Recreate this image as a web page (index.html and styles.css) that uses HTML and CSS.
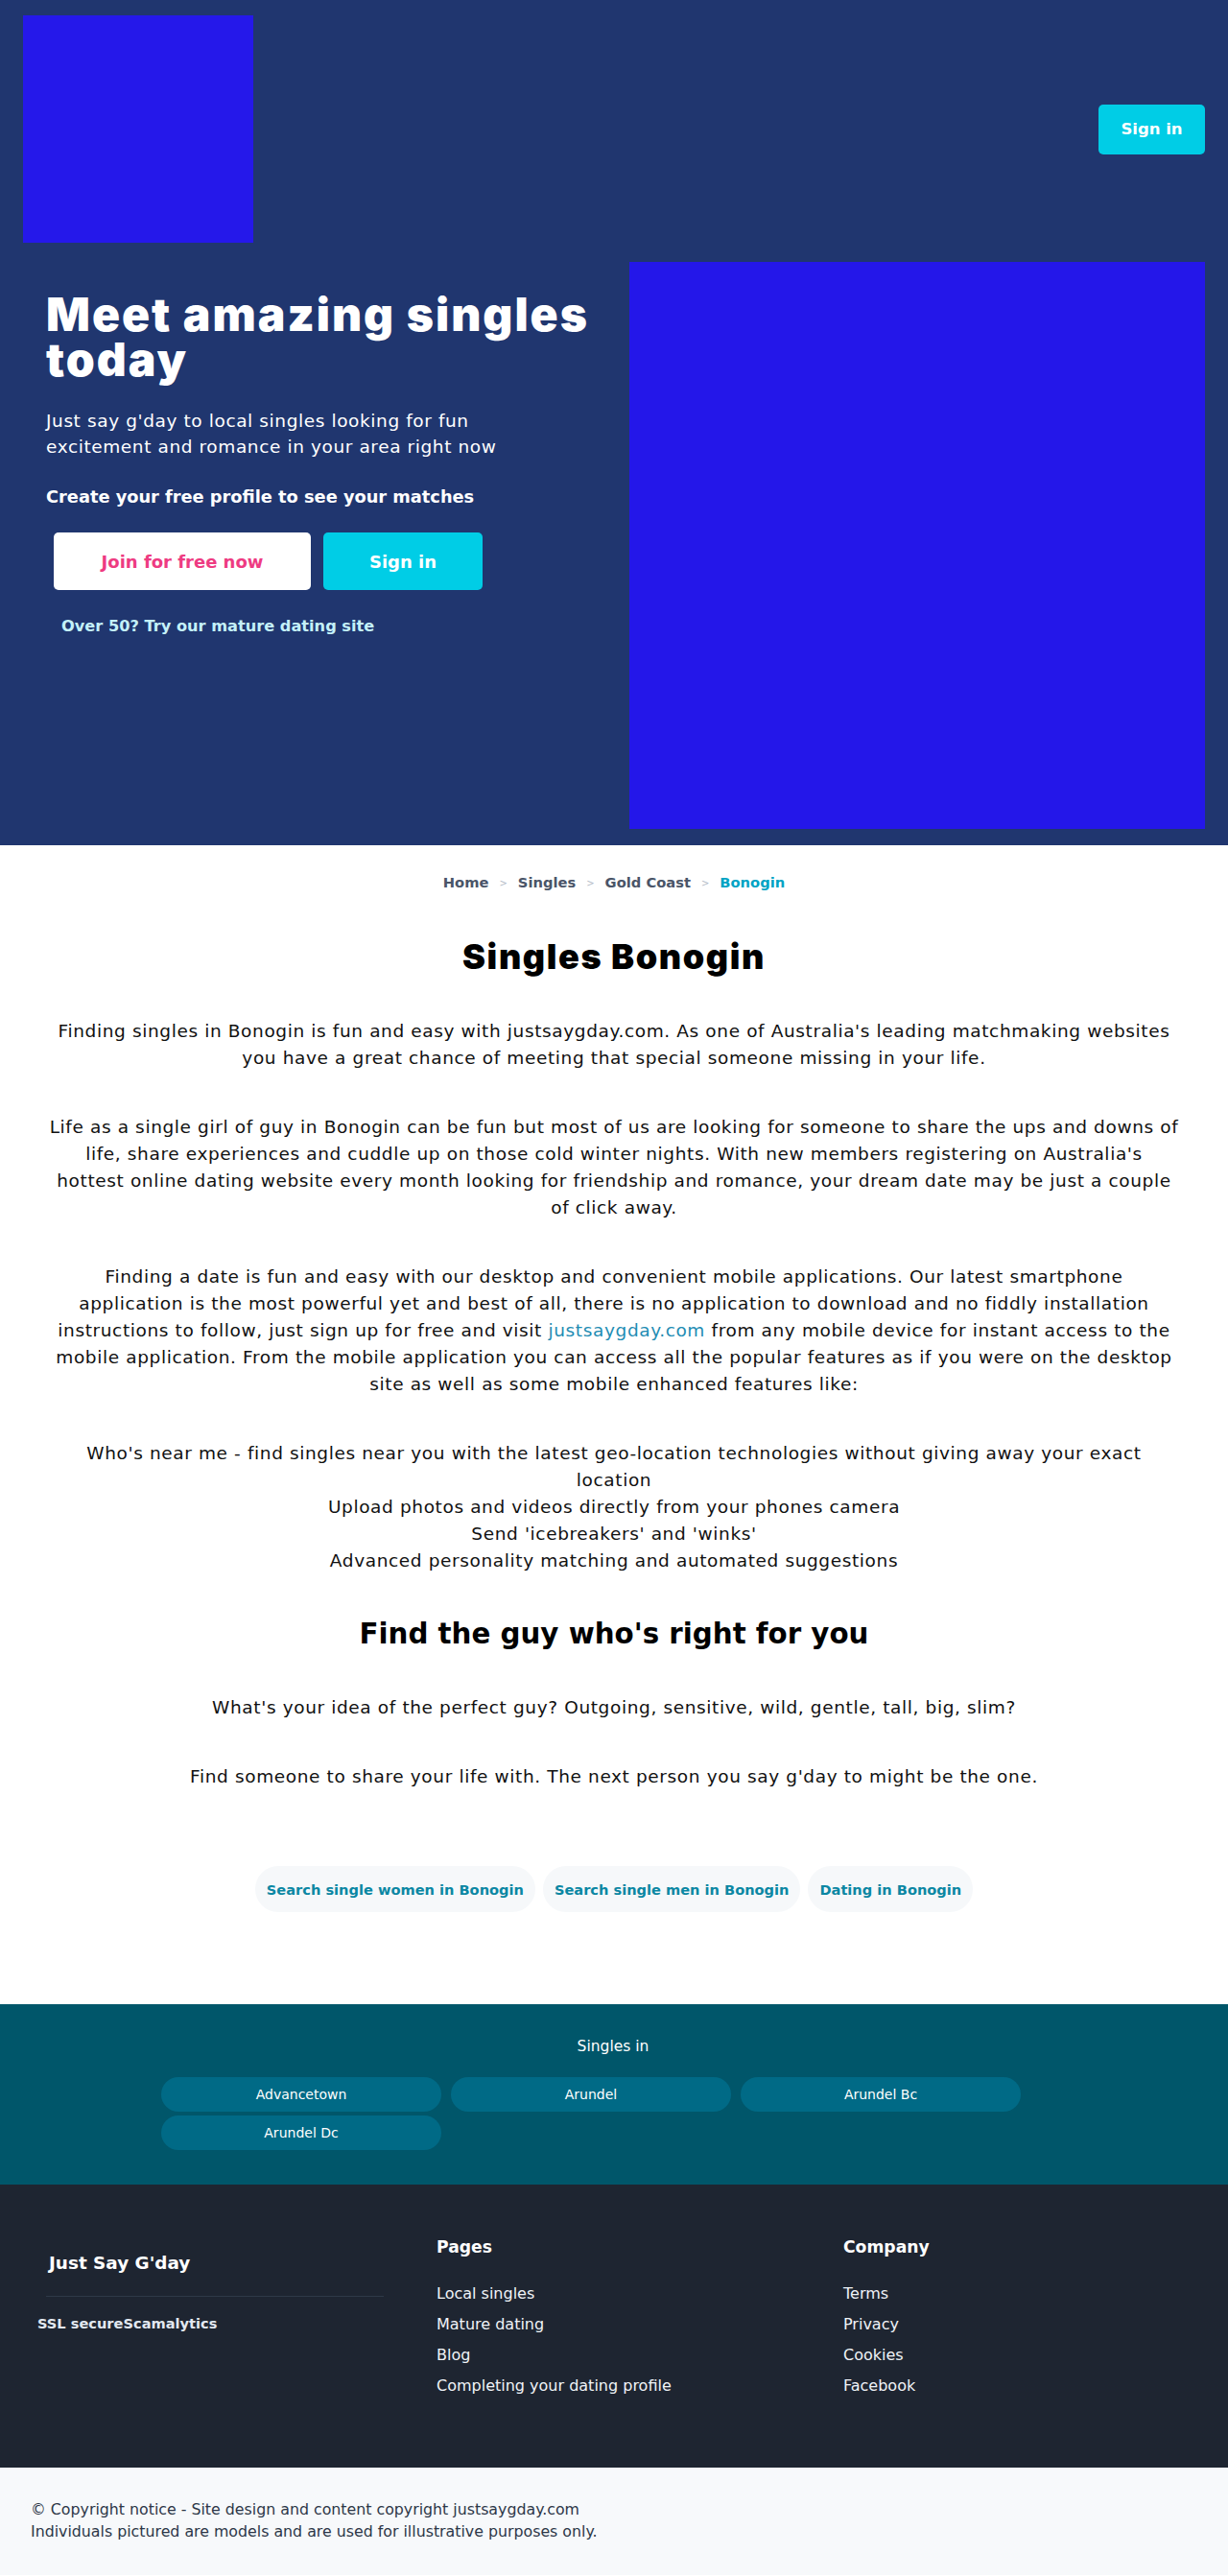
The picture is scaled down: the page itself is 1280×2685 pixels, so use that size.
FILE: index.html
```html
<!DOCTYPE html>
<html lang="en">
<head>
<meta charset="utf-8">
<title>Singles Bonogin</title>
<link rel="stylesheet" href="styles.css">
</head>
<body>
<header class="hero">
  <div class="topbar">
    <div class="logo"></div>
    <a class="btn btn-cyan btn-top" href="#">Sign in</a>
  </div>
  <div class="hero-body">
    <div class="hero-text">
      <h1 class="hero-title">Meet amazing singles today</h1>
      <p class="hero-lead">Just say g'day to local singles looking for fun excitement and romance in your area right now</p>
      <p class="hero-cta">Create your free profile to see your matches</p>
      <div class="hero-buttons">
        <a class="btn btn-white" href="#">Join for free now</a>
        <a class="btn btn-cyan btn-hero" href="#">Sign in</a>
      </div>
      <a class="mature" href="#">Over 50? Try our mature dating site</a>
    </div>
    <div class="hero-image"></div>
  </div>
</header>

<main class="content">
  <nav class="crumbs">
    <a href="#">Home</a><span class="sep">&gt;</span>
    <a href="#">Singles</a><span class="sep">&gt;</span>
    <a href="#">Gold Coast</a><span class="sep">&gt;</span>
    <a class="current" href="#">Bonogin</a>
  </nav>
  <h1 class="page-title">Singles Bonogin</h1>
  <p>Finding singles in Bonogin is fun and easy with justsaygday.com. As one of Australia's leading matchmaking websites you have a great chance of meeting that special someone missing in your life.</p>
  <p>Life as a single girl of guy in Bonogin can be fun but most of us are looking for someone to share the ups and downs of<br>life, share experiences and cuddle up on those cold winter nights. With new members registering on Australia's<br>hottest online dating website every month looking for friendship and romance, your dream date may be just a couple<br>of click away.</p>
  <p>Finding a date is fun and easy with our desktop and convenient mobile applications. Our latest smartphone<br>application is the most powerful yet and best of all, there is no application to download and no fiddly installation<br>instructions to follow, just sign up for free and visit <a class="inline-link" href="#">justsaygday.com</a> from any mobile device for instant access to the<br>mobile application. From the mobile application you can access all the popular features as if you were on the desktop<br>site as well as some mobile enhanced features like:</p>
  <ul class="features">
    <li>Who's near me - find singles near you with the latest geo-location technologies without giving away your exact location</li>
    <li>Upload photos and videos directly from your phones camera</li>
    <li>Send 'icebreakers' and 'winks'</li>
    <li>Advanced personality matching and automated suggestions</li>
  </ul>
  <h2 class="sub-title">Find the guy who's right for you</h2>
  <p>What's your idea of the perfect guy? Outgoing, sensitive, wild, gentle, tall, big, slim?</p>
  <p>Find someone to share your life with. The next person you say g'day to might be the one.</p>
  <div class="search-links">
    <a class="pill-link" href="#">Search single women in Bonogin</a>
    <a class="pill-link" href="#">Search single men in Bonogin</a>
    <a class="pill-link" href="#">Dating in Bonogin</a>
  </div>
</main>

<section class="nearby">
  <div class="nearby-title">Singles in</div>
  <div class="nearby-grid">
    <a class="town" href="#">Advancetown</a>
    <a class="town" href="#">Arundel</a>
    <a class="town" href="#">Arundel Bc</a>
    <a class="town" href="#">Arundel Dc</a>
  </div>
</section>

<footer class="footer">
  <div class="footer-cols">
    <div class="footer-brand">
      <div class="brand-name">Just Say G'day</div>
      <div class="brand-rule"></div>
      <div class="brand-badges">SSL secureScamalytics</div>
    </div>
    <div class="footer-col">
      <div class="footer-head">Pages</div>
      <a href="#">Local singles</a>
      <a href="#">Mature dating</a>
      <a href="#">Blog</a>
      <a href="#">Completing your dating profile</a>
    </div>
    <div class="footer-col">
      <div class="footer-head">Company</div>
      <a href="#">Terms</a>
      <a href="#">Privacy</a>
      <a href="#">Cookies</a>
      <a href="#">Facebook</a>
    </div>
  </div>
</footer>

<div class="copyright">
  <p>© Copyright notice - Site design and content copyright justsaygday.com</p>
  <p>Individuals pictured are models and are used for illustrative purposes only.</p>
</div>
</body>
</html>
```

FILE: styles.css
```css
* { box-sizing: border-box; }
html, body { margin: 0; padding: 0; }
body {
  font-family: "DejaVu Sans", Inter, sans-serif;
  color: #111;
  background: #fff;
}
a { text-decoration: none; color: inherit; }
p { margin: 0; }

/* HERO */
.hero {
  background: #20366f;
  padding: 16px 24px 17px 24px;
}
.topbar {
  display: flex;
  justify-content: space-between;
  align-items: center;
}
.logo {
  width: 240px;
  height: 237px;
  background: #2518ea;
}
.btn {
  display: flex;
  align-items: center;
  justify-content: center;
  border-radius: 5px;
  font-weight: 700;
  color: #fff;
}
.btn-cyan { background: #00cde6; }
.btn-top {
  width: 111px;
  height: 52px;
  font-size: 16.5px;
}
.hero-body {
  display: flex;
  justify-content: space-between;
  margin-top: 20px;
}
.hero-text {
  width: 620px;
  padding: 31px 0 0 24px;
  color: #fff;
}
.hero-title {
  margin: 0;
  font-family: Inter, "DejaVu Sans", sans-serif;
  font-size: 48px;
  line-height: 47px;
  font-weight: 900;
  letter-spacing: 2px;
}
.hero-lead {
  margin-top: 27px;
  max-width: 500px;
  font-size: 18.5px;
  line-height: 27px;
  letter-spacing: 0.6px;
}
.hero-cta {
  margin-top: 25px;
  font-size: 17.8px;
  line-height: 27px;
  font-weight: 700;
}
.hero-buttons {
  display: flex;
  gap: 13px;
  margin: 24px 0 0 8px;
}
.btn-white {
  width: 268px;
  height: 60px;
  background: #fff;
  color: #ee3b82;
  font-size: 18px;
}
.btn-hero {
  width: 166px;
  height: 60px;
  font-size: 18px;
}
.mature {
  display: block;
  margin: 26px 0 0 16px;
  font-size: 16.2px;
  line-height: 24px;
  font-weight: 700;
  color: #c4f1f9;
}
.hero-image {
  width: 600px;
  height: 591px;
  background: #2417e9;
}

/* CONTENT */
.content {
  padding: 26px 45px 96px;
  text-align: center;
}
.crumbs {
  display: flex;
  justify-content: center;
  align-items: center;
  font-size: 14.7px;
  line-height: 24px;
  font-weight: 700;
  color: #4a5568;
}
.crumbs .sep {
  margin: 2px 11px 0;
  font-size: 10px;
  font-weight: 400;
  color: #b4bcc8;
}
.crumbs .current { color: #00a3c4; }
.page-title {
  margin: 42px 0 42px;
  font-family: Inter, "DejaVu Sans", sans-serif;
  font-size: 36px;
  line-height: 44px;
  font-weight: 900;
  letter-spacing: 1.6px;
  color: #000;
}
.content p {
  margin: 0 0 44px;
  font-size: 18.5px;
  line-height: 28px;
  letter-spacing: 0.62px;
}
.inline-link { color: #1f8db4; }
.features {
  list-style: none;
  margin: 0 0 44px;
  padding: 0 33px;
  font-size: 18.5px;
  line-height: 28px;
  letter-spacing: 0.62px;
}
.sub-title {
  margin: 0 0 45px;
  font-size: 29.3px;
  line-height: 36px;
  font-weight: 700;
  color: #000;
}
.content p:last-of-type { margin-bottom: 0; }
.search-links {
  display: flex;
  justify-content: center;
  gap: 8px;
  margin-top: 79px;
}
.pill-link {
  display: flex;
  align-items: center;
  height: 48px;
  padding: 0 12px;
  border-radius: 24px;
  background: #f6f8fa;
  color: #0b87a3;
  font-size: 14.6px;
  font-weight: 700;
}

/* NEARBY */
.nearby {
  background: #00566a;
  padding: 32px 0 36px 168px;
  color: #fff;
}
.nearby-title {
  width: 942px;
  text-align: center;
  font-size: 15.5px;
  line-height: 24px;
}
.nearby-grid {
  display: grid;
  grid-template-columns: repeat(3, 292px);
  gap: 4px 10px;
  margin-top: 20px;
}
.town {
  display: flex;
  align-items: center;
  justify-content: center;
  height: 36px;
  border-radius: 18px;
  background: #006a86;
  font-size: 14px;
}

/* FOOTER */
.footer {
  background: #1e2531;
  color: #fff;
  padding: 52px 0 73px 31px;
}
.footer-cols {
  display: grid;
  grid-template-columns: 424px 424px 1fr;
}
.footer-brand {
  padding: 18px 0 0 8px;
}
.brand-name {
  padding-left: 12px;
  font-size: 18.4px;
  line-height: 24px;
  font-weight: 700;
}
.brand-rule {
  width: 352px;
  margin: 22px 0 0 9px;
  border-top: 1px solid #2f3947;
}
.brand-badges {
  margin-top: 16px;
  font-size: 14.6px;
  line-height: 24px;
  font-weight: 700;
  color: #e2e8f0;
}
.footer-col {
  display: flex;
  flex-direction: column;
  gap: 8px;
}
.footer-head {
  font-size: 17.2px;
  line-height: 27px;
  font-weight: 700;
  margin-bottom: 15px;
}
.footer-col a {
  font-size: 16px;
  line-height: 24px;
  color: #f0f3f7;
}

/* COPYRIGHT */
.copyright {
  background: #f7f9fb;
  padding: 32px 32px 34px;
  font-size: 15.8px;
  line-height: 23px;
  color: #2d3748;
}
```
